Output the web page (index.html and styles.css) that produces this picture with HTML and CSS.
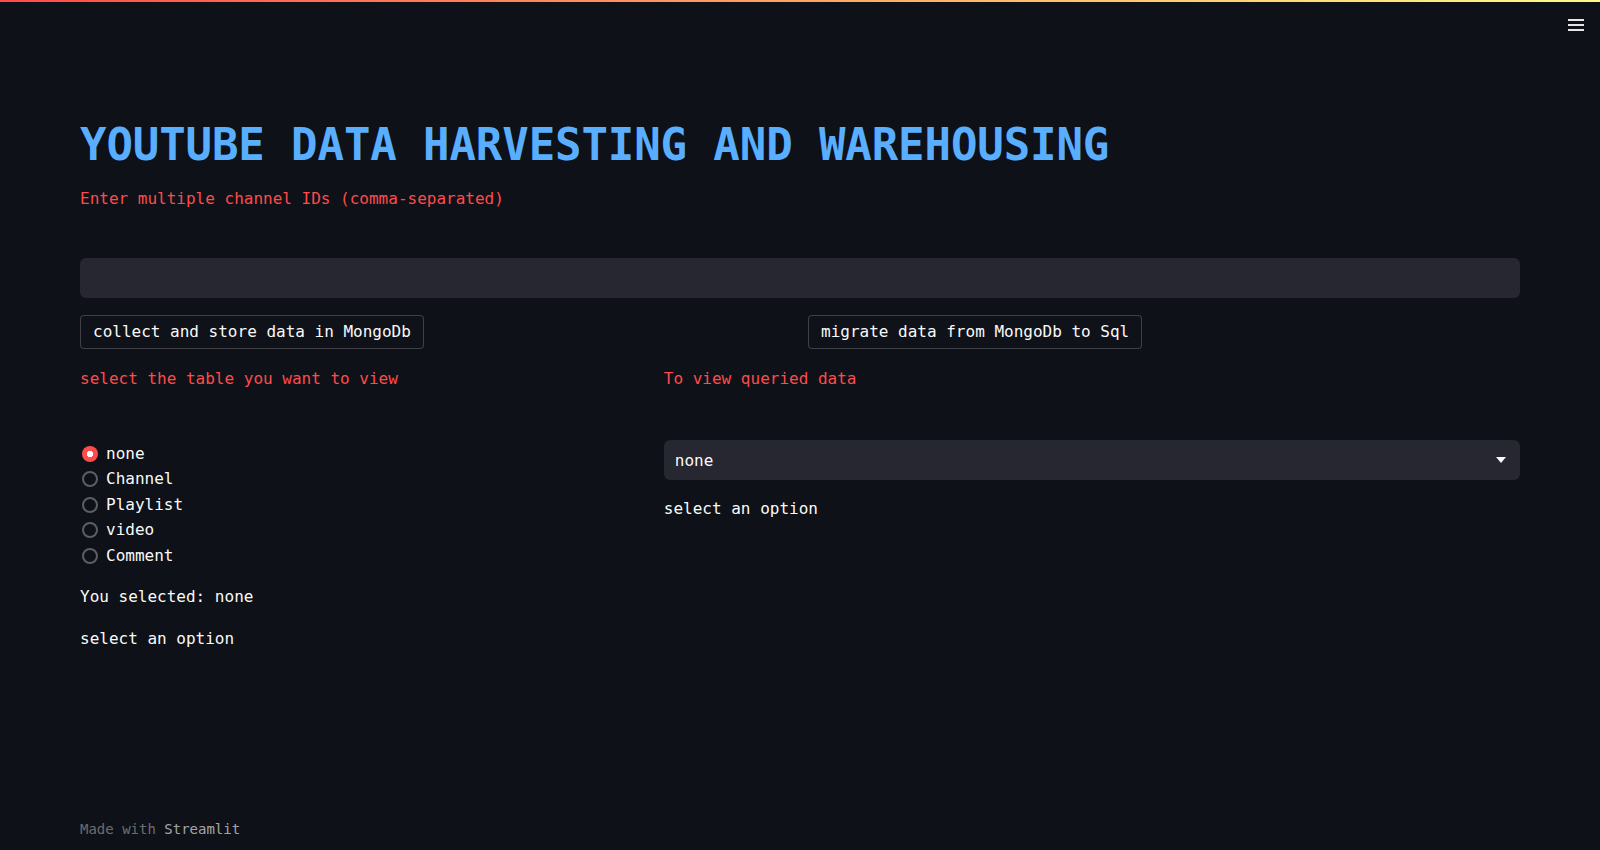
FILE: index.html
```html
<!DOCTYPE html>
<html lang="en">
<head>
<meta charset="utf-8">
<title>YouTube Data Harvesting and Warehousing</title>
<link rel="stylesheet" href="styles.css">
</head>
<body>
<div class="decoration"></div>
<button class="menu" aria-label="menu">
  <svg width="16" height="12" viewBox="0 0 16 12"><rect x="0" y="0" width="16" height="2" fill="#e6e6e6"/><rect x="0" y="5" width="16" height="2" fill="#e6e6e6"/><rect x="0" y="10" width="16" height="2" fill="#e6e6e6"/></svg>
</button>
<div class="app">
  <main class="main">
    <h1 class="title">YOUTUBE DATA HARVESTING AND WAREHOUSING</h1>
    <p class="label-red first">Enter multiple channel IDs (comma-separated)</p>
    <div class="text-input"></div>
    <div class="cols cols-even">
      <div class="col"><button class="btn">collect and store data in MongoDb</button></div>
      <div class="col"><button class="btn">migrate data from MongoDb to Sql</button></div>
    </div>
    <div class="cols cols-23">
      <div class="col">
        <p class="label-red">select the table you want to view</p>
        <div class="radio-group">
          <div class="radio checked"><span class="dot"></span><span>none</span></div>
          <div class="radio"><span class="dot"></span><span>Channel</span></div>
          <div class="radio"><span class="dot"></span><span>Playlist</span></div>
          <div class="radio"><span class="dot"></span><span>video</span></div>
          <div class="radio"><span class="dot"></span><span>Comment</span></div>
        </div>
        <p class="text sel">You selected: none</p>
        <p class="text opt">select an option</p>
      </div>
      <div class="col">
        <p class="label-red">To view queried data</p>
        <div class="select">
          <span>none</span>
          <svg width="10" height="6" viewBox="0 0 10 6"><path d="M0 0 L10 0 L5 6 Z" fill="#fafafa"/></svg>
        </div>
        <p class="text opt2">select an option</p>
      </div>
    </div>
  </main>
  <footer class="footer">Made with <span class="brand">Streamlit</span></footer>
</div>
</body>
</html>
```
FILE: styles.css
```css
* { box-sizing: border-box; }
html, body {
  margin: 0;
  padding: 0;
  background: #0e1117;
  color: #fafafa;
  font-family: "DejaVu Sans Mono", "Liberation Mono", monospace;
  font-size: 16px;
}
.decoration {
  position: fixed;
  top: 0; left: 0; right: 0;
  height: 2px;
  background: linear-gradient(90deg, #ff4b4b, #fffd80);
}
.menu {
  position: fixed;
  top: 19px;
  right: 16px;
  width: 16px;
  height: 12px;
  padding: 0;
  border: 0;
  background: transparent;
  display: flex;
}
.app {
  height: 100vh;
  display: flex;
  flex-direction: column;
}
.main {
  padding: 118px 80px 0;
}
.title {
  margin: 0;
  font-size: 44px;
  line-height: 54px;
  font-weight: 700;
  color: #59aeff;
  letter-spacing: -0.1px;
}
p { margin: 0; }
.label-red {
  color: #ff4b4b;
  line-height: 24px;
  font-size: 16px;
}
.label-red.first { margin-top: 15px; }
.text-input {
  margin-top: 47px;
  height: 40px;
  background: #262730;
  border-radius: 6px;
}
.cols {
  display: grid;
  column-gap: 16px;
}
.cols-even { grid-template-columns: 1fr 1fr; margin-top: 17px; }
.cols-23 { grid-template-columns: 2fr 3fr; column-gap: 13px; margin-top: 18px; }
.btn {
  height: 34px;
  padding: 0 12px;
  background: #0f1219;
  border: 1px solid rgba(250, 250, 250, 0.2);
  border-radius: 4px;
  color: #fafafa;
  font-family: inherit;
  font-size: 16px;
  line-height: 32px;
}
.radio-group {
  margin-top: 50px;
  display: flex;
  flex-direction: column;
}
.radio {
  height: 25.5px;
  display: flex;
  align-items: center;
  gap: 8px;
  line-height: 24px;
}
.radio .dot {
  width: 16px;
  height: 16px;
  border-radius: 50%;
  border: 2px solid #5b5e64;
  margin-left: 2px;
  flex: none;
}
.radio.checked .dot {
  border: 0;
  background: radial-gradient(circle, #ffffff 0 3px, #ff4b4b 3.5px);
}
.text { line-height: 24px; }
.sel { margin-top: 16.5px; }
.opt { margin-top: 18px; }
.select {
  margin-top: 49px;
  height: 40px;
  background: #262730;
  border-radius: 6px;
  display: flex;
  align-items: center;
  justify-content: space-between;
  padding: 0 14px 0 11px;
}
.opt2 { margin-top: 17px; }
.footer {
  margin-top: auto;
  padding: 0 80px 11px;
  font-size: 14px;
  line-height: 20px;
  color: rgba(250, 250, 250, 0.4);
}
.footer .brand { color: rgba(250, 250, 250, 0.65); }
```
